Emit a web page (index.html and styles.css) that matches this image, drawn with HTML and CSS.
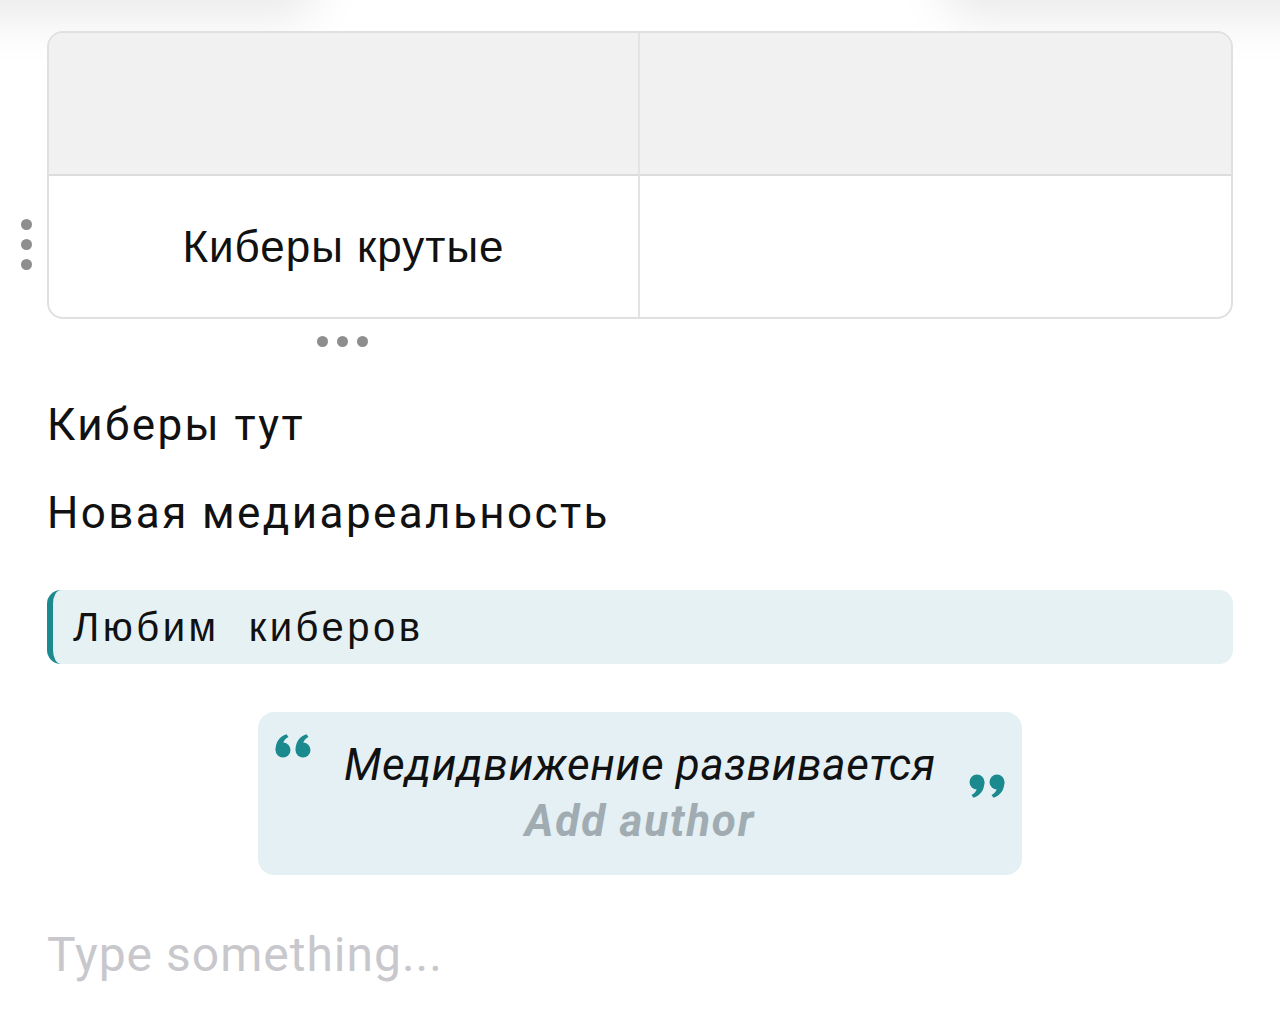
FILE: index.html
```html
<!DOCTYPE html>
<html lang="ru">
<head>
    <meta charset="UTF-8">
    <meta name="viewport" content="width=device-width, initial-scale=1.0">
    <title>Editor</title>
    <link rel="stylesheet" href="styles.css">
</head>
<body>
    <div class="glow glow-left"></div>
    <div class="glow glow-right"></div>

    <div class="editor">
        <div class="table-block">
            <div class="row-handle">
                <span class="dot"></span><span class="dot"></span><span class="dot"></span>
            </div>
            <table class="grid">
                <tr class="head">
                    <th></th>
                    <th></th>
                </tr>
                <tr>
                    <td>Киберы крутые</td>
                    <td></td>
                </tr>
            </table>
            <div class="col-handle">
                <span class="dot"></span><span class="dot"></span><span class="dot"></span>
            </div>
        </div>

        <p class="para first">Киберы тут</p>
        <p class="para">Новая медиареальность</p>

        <pre class="code">Любим  киберов</pre>

        <div class="quote">
            <svg class="mark open" width="36" height="24" viewBox="0 0 36 24">
                <g id="q">
                    <circle cx="8" cy="16" r="7.5"/>
                    <path d="M0.6 16 C0.6 8 4.5 2.5 11.5 0.3 L13.5 3 C9.5 5 7.5 8.5 8 12 Z"/>
                </g>
                <use href="#q" x="20"/>
            </svg>
            <div class="quote-body">
                <div class="quote-text">Медидвижение развивается</div>
                <div class="quote-author">Add author</div>
            </div>
            <svg class="mark close" width="36" height="26" viewBox="0 0 36 24">
                <g transform="rotate(180 18 12)">
                    <use href="#q"/>
                    <use href="#q" x="20"/>
                </g>
            </svg>
        </div>

        <div class="placeholder">Type something...</div>
    </div>
</body>
</html>
```

FILE: styles.css
```css
body {
    margin: 0;
    padding: 0;
    background: #fff;
    font-family: Roboto, 'Liberation Sans', Arial, sans-serif;
    color: #111;
    overflow: hidden;
}

/* soft shadows of floating bars above the fold */
.glow {
    position: absolute;
    top: -60px;
    height: 80px;
    border-radius: 40px;
    background: rgba(0, 0, 0, 0.08);
    filter: blur(22px);
}

.glow-left {
    left: -60px;
    width: 380px;
}

.glow-right {
    right: -60px;
    width: 400px;
}

.editor {
    padding: 31px 47px 0 47px;
}

.table-block {
    position: relative;
}

.grid {
    width: 100%;
    border-collapse: separate;
    border-spacing: 0;
    border: 2px solid #e0e0e0;
    border-radius: 16px;
    overflow: hidden;
    table-layout: fixed;
}

.grid th,
.grid td {
    height: 141px;
    padding: 0;
    text-align: center;
    font-family: 'Liberation Sans', Arial, sans-serif;
    font-size: 44px;
    font-weight: normal;
    letter-spacing: 1px;
}

.grid th {
    background: #f1f1f1;
    border-bottom: 2px solid #dcdcdc;
}

.grid th:first-child,
.grid td:first-child {
    border-right: 2px solid #e3e3e3;
}

.dot {
    display: block;
    width: 11px;
    height: 11px;
    border-radius: 50%;
    background: #8e8e8e;
}

.row-handle {
    position: absolute;
    left: -26px;
    top: 188px;
    display: flex;
    flex-direction: column;
    gap: 9px;
}

.col-handle {
    position: absolute;
    left: 270px;
    top: 305px;
    display: flex;
    gap: 9px;
}

.para {
    margin: 0;
    font-size: 44px;
    line-height: 60px;
    letter-spacing: 2.4px;
}

.para.first {
    margin-top: 76px;
}

.para + .para {
    margin-top: 28px;
}

.code {
    margin: 47px 0 0 0;
    height: 74px;
    box-sizing: border-box;
    padding: 0 0 0 20px;
    display: flex;
    align-items: center;
    background: #e5f1f3;
    border-left: 6px solid #1b8a8f;
    border-radius: 14px;
    font-family: 'Liberation Sans', Arial, sans-serif;
    font-size: 40px;
    letter-spacing: 3.5px;
    white-space: pre;
    color: #111;
}

.quote {
    width: 764px;
    margin: 48px auto 0 auto;
    height: 163px;
    box-sizing: border-box;
    padding: 0 17px;
    background: #e4f0f3;
    border-radius: 16px;
    display: flex;
    align-items: flex-start;
}

.quote-body {
    flex: 1;
    text-align: center;
    padding-top: 28px;
}

.quote-text {
    font-style: italic;
    font-size: 44px;
    line-height: 50px;
    letter-spacing: 0.7px;
    color: #111;
}

.quote-author {
    font-style: italic;
    font-weight: bold;
    font-size: 44px;
    line-height: 62px;
    letter-spacing: 1.8px;
    color: #a0acb2;
}

.mark {
    fill: #1b8a8f;
    flex-shrink: 0;
}

.mark.open {
    margin-top: 22px;
}

.mark.close {
    margin-top: 61px;
}

.placeholder {
    margin-top: 50px;
    font-size: 48px;
    line-height: 60px;
    letter-spacing: 1px;
    color: #c7c7cc;
}
```
